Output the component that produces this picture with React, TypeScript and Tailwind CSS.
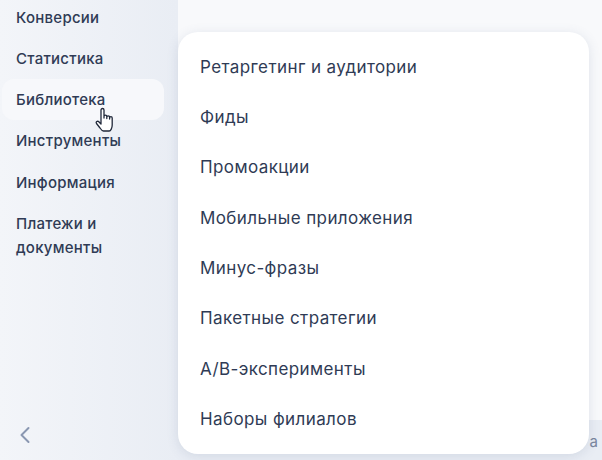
export default function App() {
  const side = ["Конверсии", "Статистика", "Библиотека", "Инструменты", "Информация"];
  const menu = ["Ретаргетинг и аудитории", "Фиды", "Промоакции", "Мобильные приложения", "Минус-фразы", "Пакетные стратегии", "A/B-эксперименты", "Наборы филиалов"];
  return (
    <div className="relative w-[602px] h-[460px] overflow-hidden flex bg-[#f8f9fb] font-['Inter','Noto_Sans',sans-serif]">
      <aside className="w-[178px] h-full flex flex-col justify-between bg-gradient-to-r from-[#f3f5f9] to-[#e9edf4] pl-[2px] pr-[14px] pb-[10px]">
        <nav className="flex flex-col -mt-[3.6px]">
          {side.map((s) => (
            <div key={s} className={`h-[41.25px] flex items-center pt-[1.5px] pl-[14px] rounded-[12px] text-[15px] tracking-[0.25px] font-medium text-[#2f3b55] ${s === "Библиотека" ? "bg-[#f7f8fb]" : ""}`}>{s}</div>
          ))}
          <div className="pl-[14px] pt-[9.5px] text-[15px] tracking-[0.25px] leading-[23.5px] font-medium text-[#2f3b55]">Платежи и<br />документы</div>
        </nav>
        <div className="pl-[17px] h-[30px] flex items-center">
          <svg width="12" height="18" viewBox="0 0 12 18" fill="none" stroke="#8a97b1" strokeWidth="2" strokeLinecap="round" strokeLinejoin="round">
            <path d="M9.5 2 L2.5 9 L9.5 16" />
          </svg>
        </div>
      </aside>
      <main className="flex-1 relative">
        <div className="absolute left-0 right-0 bottom-0 h-[40px] bg-[#e9edf4]">
          <span className="absolute right-[4px] top-[11px] text-[15px] text-[#7a869e]">а</span>
        </div>
      </main>
      <div className="absolute left-[178px] top-[32px] w-[411px] h-[422px] bg-white rounded-[20px] shadow-[0_2px_12px_rgba(90,105,140,0.16)] pt-[10.5px] pl-[22px] flex flex-col">
        {menu.map((m) => (
          <div key={m} className="h-[50.3px] flex items-center text-[17px] tracking-[0.4px] text-[#2f3b55]">{m}</div>
        ))}
      </div>
      <svg className="absolute left-[95px] top-[107px]" width="20" height="26" viewBox="0 0 20 26" fill="#fff" stroke="#20283a" strokeWidth="1.3" strokeLinejoin="round" strokeLinecap="round">
        <path d="M6 14 V3 a1.5 1.5 0 0 1 3 0 V11 V9.5 a1.4 1.4 0 0 1 2.8 0 V11.5 V10.2 a1.4 1.4 0 0 1 2.8 0 V12 V11 a1.3 1.3 0 0 1 2.6 0 V18 c0 3-1.5 6-3 6 H8.5 c-1.5 0-2.5-1.5-3.5-3 L1.5 16.5 c-1-1.5 1-3 2.3-1.8 L6 17 Z" />
      </svg>
    </div>
  );
}
